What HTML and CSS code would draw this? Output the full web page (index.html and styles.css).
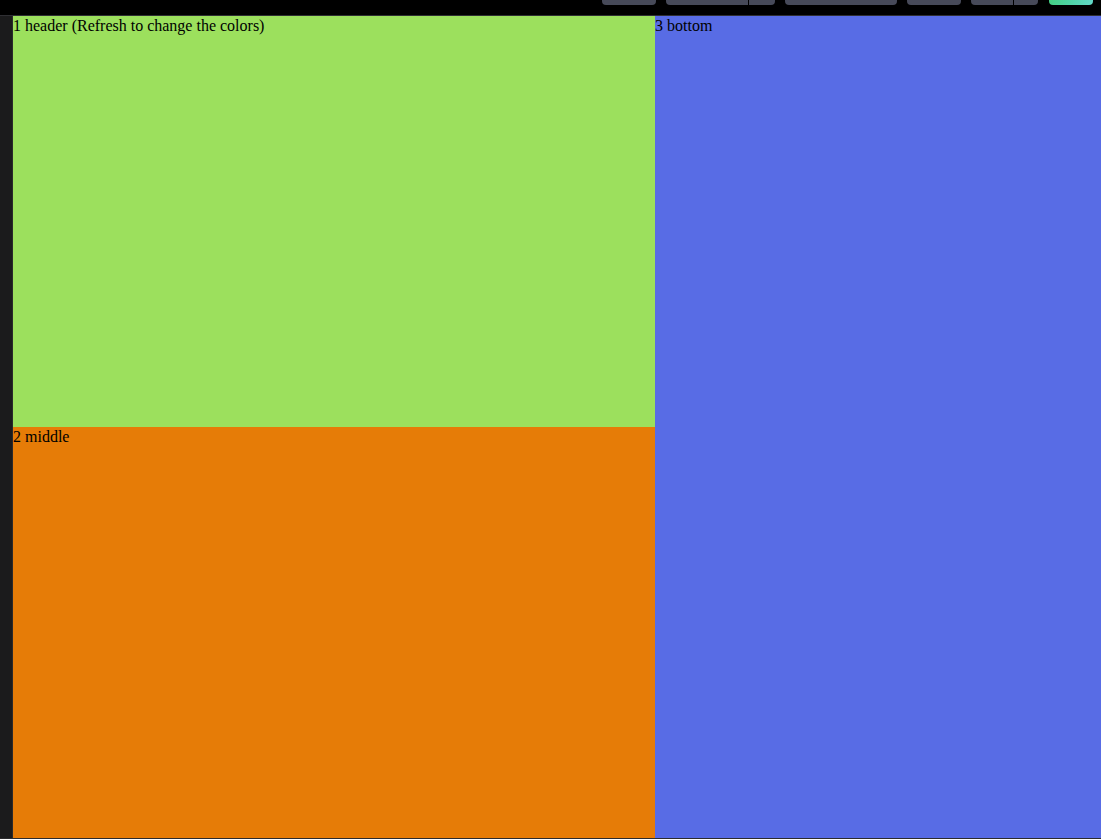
FILE: index.html
```html
<!DOCTYPE html>
<html>
<head>
<meta charset="utf-8">
<link rel="stylesheet" href="styles.css">
</head>
<body>
<div class="topbar">
  <div class="btn w54"></div>
  <div class="btn split"><span class="seg w82"></span><span class="seg w26"></span></div>
  <div class="btn w112"></div>
  <div class="btn w54"></div>
  <div class="btn split"><span class="seg w42"></span><span class="seg w24"></span></div>
  <div class="btn go"></div>
</div>
<div class="main">
  <div class="side"></div>
  <div class="grid">
    <div class="cell header">1 header (Refresh to change the colors)</div>
    <div class="cell bottom">3 bottom</div>
    <div class="cell middle">2 middle</div>
  </div>
</div>
</body>
</html>
```
FILE: styles.css
```css
html, body {
  margin: 0;
  padding: 0;
  background: #000;
  width: 1101px;
  height: 839px;
  overflow: hidden;
}
.topbar {
  height: 15px;
  background: #000;
  border-bottom: 1px solid #2f2f33;
  display: flex;
  justify-content: flex-end;
  align-items: flex-start;
  padding-right: 8px;
}
.btn {
  height: 5px;
  background: #474a59;
  border-radius: 0 0 4px 4px;
  margin-left: 10px;
}
.btn.split {
  display: flex;
  background: transparent;
  overflow: hidden;
}
.seg {
  display: block;
  height: 5px;
  background: #474a59;
}
.seg + .seg {
  margin-left: 1px;
}
.w54 { width: 54px; }
.w112 { width: 112px; }
.w82 { width: 82px; }
.w26 { width: 26px; }
.w42 { width: 42px; }
.w24 { width: 24px; }
.btn.go {
  width: 44px;
  margin-left: 11px;
  background: linear-gradient(110deg, #44cf82 0%, #4fd3a6 50%, #63d7c8 100%);
}
.main {
  display: flex;
  height: 822px;
  border-bottom: 1px solid #2c2c2e;
}
.side {
  width: 12px;
  background: #1b1b1c;
  border-right: 1px solid #2a2a2c;
}
.grid {
  display: grid;
  grid-template-columns: 642px 446px;
  grid-template-rows: 411px 411px;
  font-family: "Liberation Serif", "Times New Roman", serif;
  font-size: 16px;
  color: #000;
}
.cell {
  line-height: 20px;
}
.header {
  background: #9ce05d;
  grid-column: 1;
  grid-row: 1;
}
.middle {
  background: #e67c07;
  grid-column: 1;
  grid-row: 2;
}
.bottom {
  background: #586ce5;
  grid-column: 2;
  grid-row: 1 / span 2;
}
```
